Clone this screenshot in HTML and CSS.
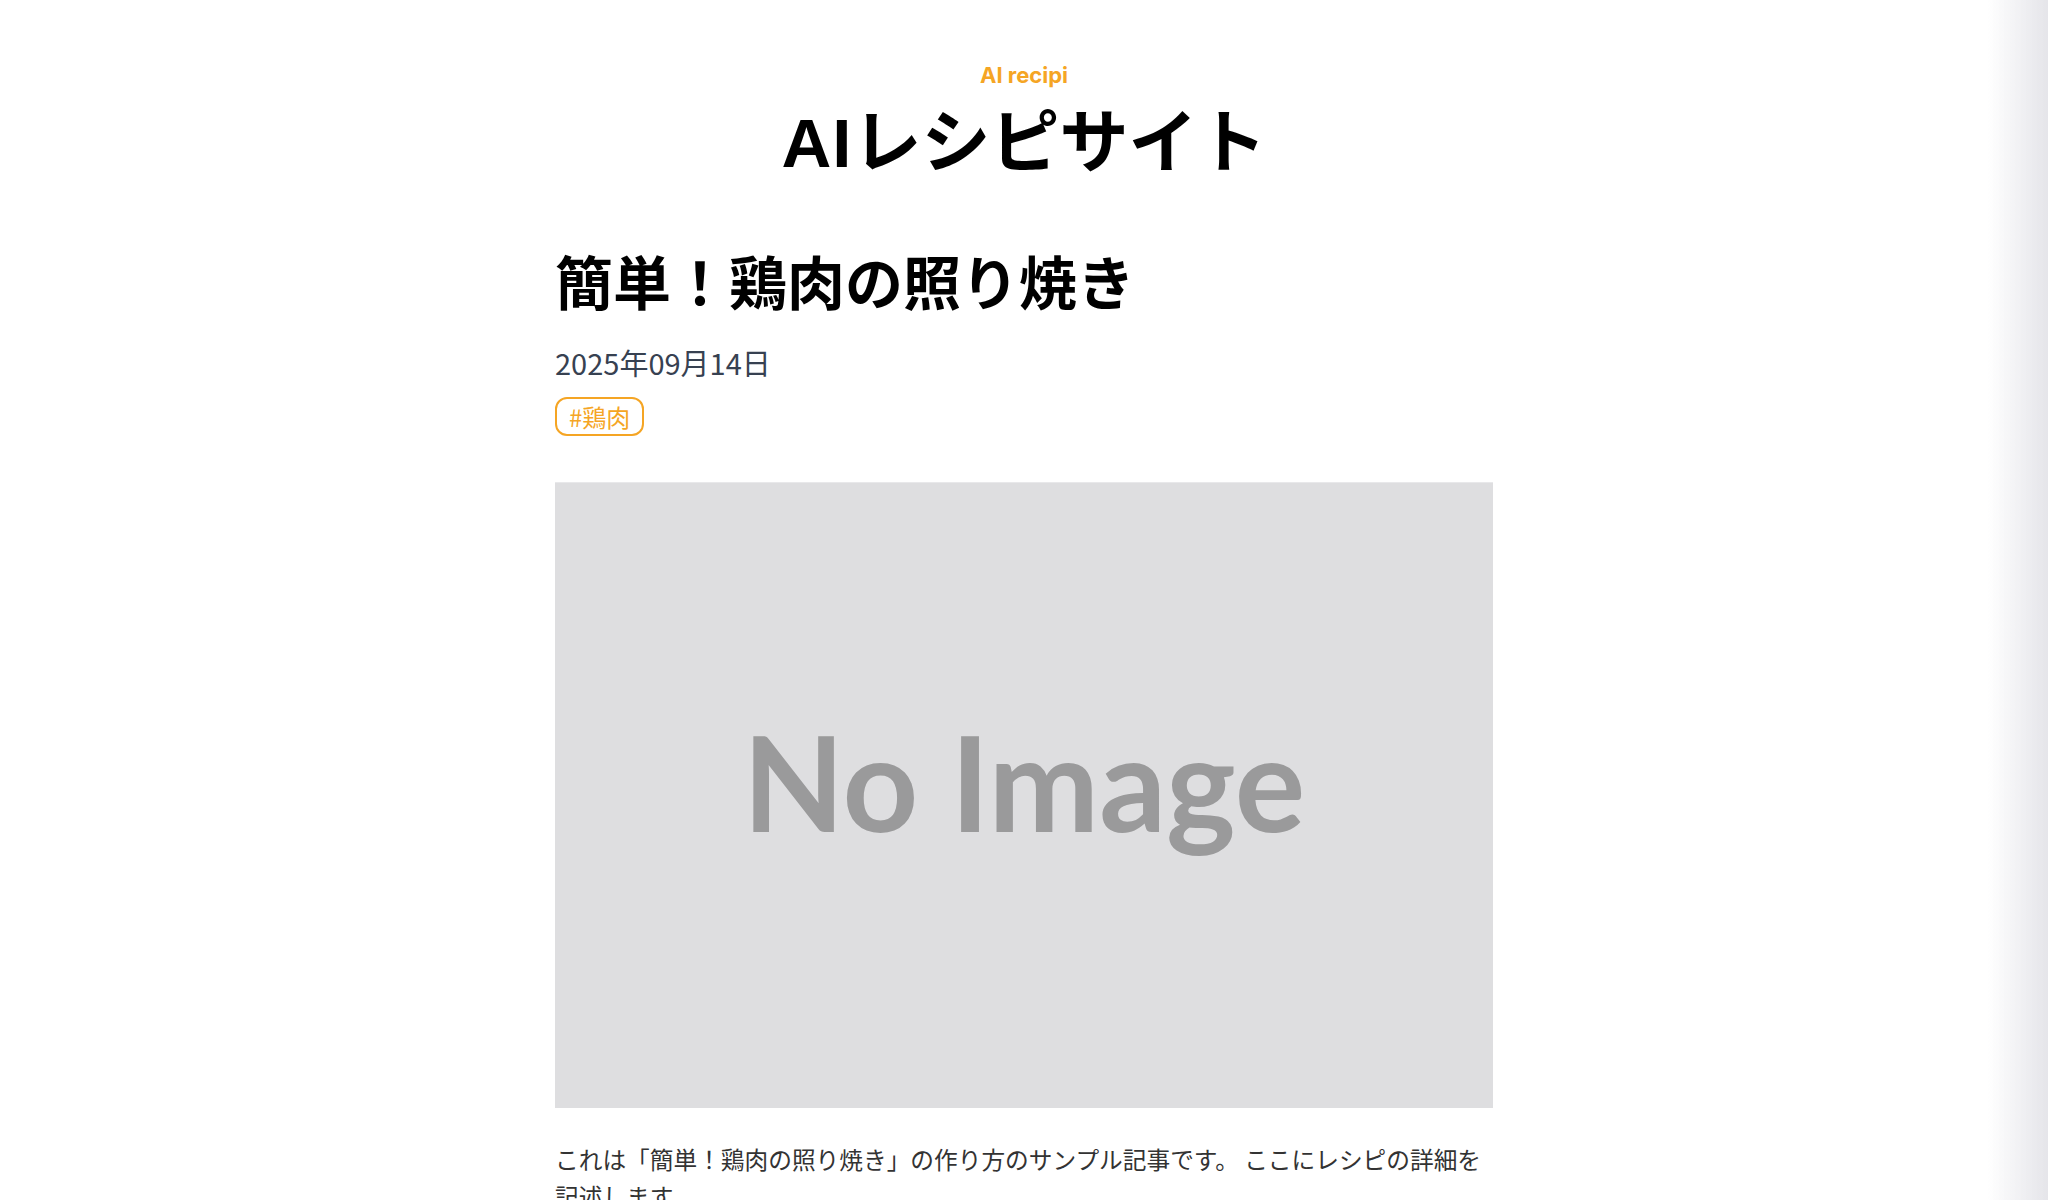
FILE: index.html
```html
<!DOCTYPE html>
<html lang="ja">
<head>
<meta charset="utf-8">
<title>AIレシピサイト</title>
<link rel="stylesheet" href="styles.css">
</head>
<body>
<div class="page">
  <header class="site-header">
    <p class="site-sub">AI recipi</p>
    <h1 class="site-title"><span class="latin">AI</span>レシピサイト</h1>
  </header>
  <main class="article">
    <h2 class="article-title">簡単！鶏肉の照り焼き</h2>
    <p class="article-date">2025年09月14日</p>
    <div class="tags"><span class="tag">#鶏肉</span></div>
    <div class="thumb"><span class="thumb-text">No Image</span></div>
    <p class="article-body">これは「簡単！鶏肉の照り焼き」の作り方のサンプル記事です。 ここにレシピの詳細を記述します。</p>
  </main>
</div>
<div class="edge-shadow"></div>
</body>
</html>
```
FILE: styles.css
```css
html {
  background: #000;
  height: 100%;
}
body {
  margin: 0;
  min-height: 100%;
  background: #fff;
  border-radius: 0 0 12px 12px;
  overflow: hidden;
  font-family: "Noto Sans CJK JP", "Noto Sans", sans-serif;
  color: #111;
}
.page {
  width: 938px;
  margin: 0 auto;
  padding-top: 61px;
}
.site-header {
  text-align: center;
}
.site-sub {
  margin: 0;
  font-family: Inter, "Noto Sans", sans-serif;
  font-weight: 700;
  font-size: 22px;
  line-height: 29px;
  color: #f5a524;
}
.site-title {
  margin: 12px 0 0;
  font-family: "Liberation Sans", "Noto Sans CJK JP", sans-serif;
  font-weight: 700;
  font-size: 69px;
  line-height: 84px;
  color: #000;
}
.site-title .latin {
  letter-spacing: 1px;
}
.article {
  margin-top: 54px;
}
.article-title {
  margin: 0;
  font-size: 58px;
  font-weight: 700;
  line-height: 81px;
  color: #000;
}
.article-date {
  margin: 21px 0 0;
  font-size: 29px;
  line-height: 40px;
  color: #374151;
}
.tags {
  margin-top: 15px;
  display: flex;
}
.tag {
  border: 2px solid #f5a524;
  border-radius: 12px;
  padding: 2px 12px;
  font-size: 24px;
  line-height: 31px;
  color: #f5a524;
}
.thumb {
  margin-top: 46px;
  height: 626px;
  background: #dedee0;
  border-top: 1px solid #e8e8ea;
  box-sizing: border-box;
  display: flex;
  align-items: center;
  justify-content: center;
}
.thumb-text {
  font-family: Lato, "Noto Sans", sans-serif;
  font-weight: 700;
  font-size: 132px;
  line-height: 1;
  color: #9a9a9b;
  margin-top: -30px;
}
.article-body {
  margin: 33px 0 0;
  font-size: 23.7px;
  line-height: 36.6px;
  color: #333;
}
.edge-shadow {
  position: fixed;
  top: 0;
  right: 0;
  width: 60px;
  height: 100%;
  background: linear-gradient(to right, rgba(220, 220, 226, 0), rgba(220, 220, 226, 0.75));
  pointer-events: none;
}
```
